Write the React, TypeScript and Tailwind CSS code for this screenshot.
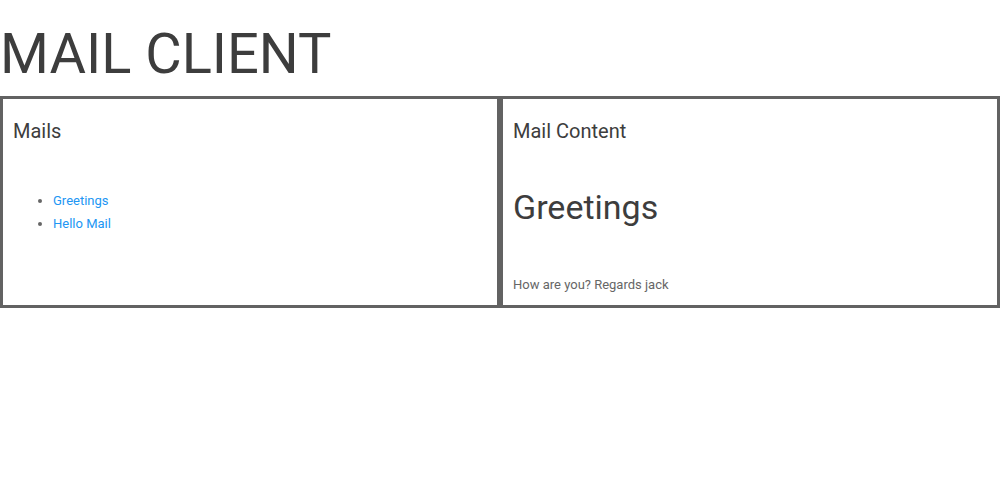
export default function App() {
  return (
    <div className="bg-white text-[#3d3d3d]" style={{ fontFamily: "Roboto, sans-serif" }}>
      <h1 className="text-[56px] leading-[70px] pt-[19px] pb-[7px] m-0 font-normal">MAIL CLIENT</h1>
      <div className="flex">
        <div className="w-1/2 h-[212px] border-[3px] border-[#626262] px-[10px] pt-[17px]">
          <h3 className="text-[20px] leading-[30px] font-normal">Mails</h3>
          <ul className="list-disc pl-[40px] mt-[43px] text-[13px] leading-[23px] marker:text-[#666]">
            <li><a href="#" className="text-[#2196f3]">Greetings</a></li>
            <li><a href="#" className="text-[#2196f3]">Hello Mail</a></li>
          </ul>
        </div>
        <div className="w-1/2 h-[212px] border-[3px] border-[#626262] px-[10px] pt-[17px]">
          <h3 className="text-[20px] leading-[30px] font-normal">Mail Content</h3>
          <h2 className="text-[34px] leading-[40px] font-normal mt-[41px]">Greetings</h2>
          <p className="text-[13px] leading-[20px] text-[#666] mt-[48px]">How are you? Regards jack</p>
        </div>
      </div>
    </div>
  );
}
